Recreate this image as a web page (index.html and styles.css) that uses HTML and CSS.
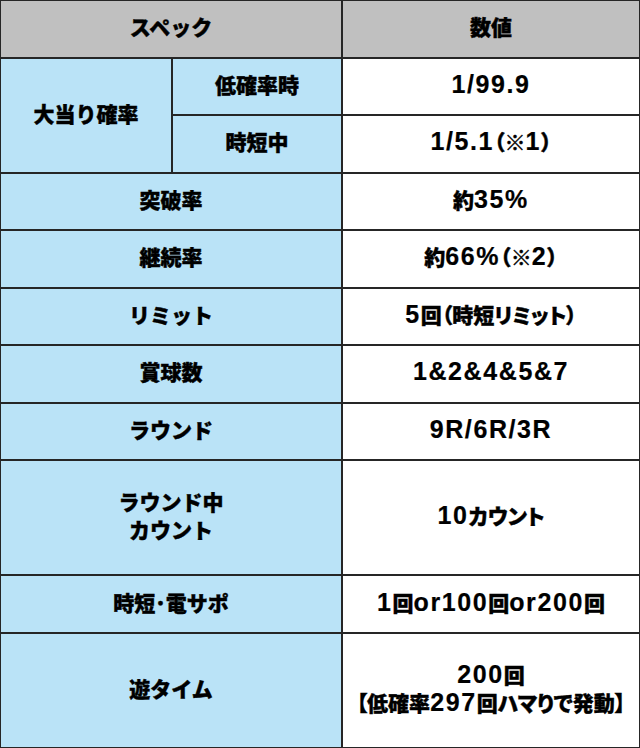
FILE: index.html
```html
<!DOCTYPE html>
<html lang="ja">
<head>
<meta charset="utf-8">
<title>スペック</title>
<link rel="stylesheet" href="styles.css">
</head>
<body>
<div class="spec">
  <div class="cell head wide">スペック</div>
  <div class="cell head">数値</div>

  <div class="cell lab tall">大当り確率</div>
  <div class="cell lab">低確率時</div>
  <div class="cell val"><span class="n">1/99.9</span></div>
  <div class="cell lab">時短中</div>
  <div class="cell val"><span><span class="n">1/5.1</span>（※<span class="n">1</span>）</span></div>

  <div class="cell lab wide">突破率</div>
  <div class="cell val"><span>約<span class="n">35%</span></span></div>

  <div class="cell lab wide">継続率</div>
  <div class="cell val"><span>約<span class="n">66%</span>（※<span class="n">2</span>）</span></div>

  <div class="cell lab wide">リミット</div>
  <div class="cell val"><span><span class="n">5</span>回（時短リミット）</span></div>

  <div class="cell lab wide">賞球数</div>
  <div class="cell val"><span class="n">1&amp;2&amp;4&amp;5&amp;7</span></div>

  <div class="cell lab wide">ラウンド</div>
  <div class="cell val"><span class="n">9R/6R/3R</span></div>

  <div class="cell lab wide tall">ラウンド中<br>カウント</div>
  <div class="cell val tall"><span><span class="n">10</span>カウント</span></div>

  <div class="cell lab wide">時短･電サポ</div>
  <div class="cell val"><span><span class="n">1</span>回<span class="n">or100</span>回<span class="n">or200</span>回</span></div>

  <div class="cell lab wide tall">遊タイム</div>
  <div class="cell val tall"><span><span class="n">200</span>回<br>【低確率<span class="n">297</span>回ハマりで発動】</span></div>
</div>
</body>
</html>
```

FILE: styles.css
```css
html, body {
  margin: 0;
  padding: 0;
  background: #ffffff;
}

.spec {
  width: 640px;
  height: 748px;
  box-sizing: border-box;
  padding: 1px;
  background: #262626;
  display: grid;
  grid-template-columns: 170px 168px 1fr;
  grid-template-rows: repeat(13, 1fr);
  gap: 2px;
}

.cell {
  display: flex;
  align-items: center;
  justify-content: center;
  text-align: center;
  box-sizing: border-box;
  padding-bottom: 5px;
  font-family: "Noto Sans CJK JP", sans-serif;
  font-weight: 900;
  font-size: 21px;
  line-height: 28px;
  color: #000000;
  -webkit-text-stroke: 0.4px #000000;
}

.head {
  background: #c0c0c0;
}

.lab {
  background: #bae3f7;
}

.val {
  background: #ffffff;
  font-feature-settings: "palt";
}

.n {
  font-family: "Liberation Sans", sans-serif;
  font-weight: 700;
  font-size: 25px;
  letter-spacing: 1.6px;
  -webkit-text-stroke: 0.2px #000000;
}

.wide {
  grid-column: span 2;
}

.tall {
  grid-row: span 2;
}
```
